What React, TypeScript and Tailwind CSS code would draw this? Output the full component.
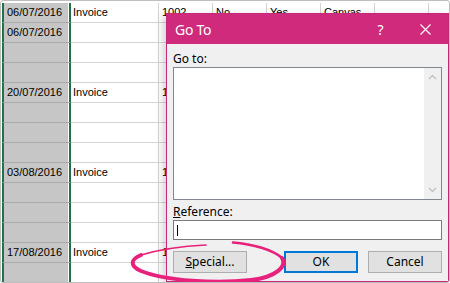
import React from 'react';

const rows: string[][] = [
  ['06/07/2016', 'Invoice', '1002', 'No', 'Yes', 'Canvas'],
  ['06/07/2016'],
  [],
  [],
  ['20/07/2016', 'Invoice', '1003'],
  [],
  [],
  [],
  ['03/08/2016', 'Invoice', '1004'],
  [],
  [],
  [],
  ['17/08/2016', 'Invoice', '1005'],
  [],
];

const Chevron = ({ up }: { up?: boolean }) => (
  <svg width="9" height="6" viewBox="0 0 9 6" className="block">
    <polyline
      points={up ? '1,5 4.5,1.5 8,5' : '1,1 4.5,4.5 8,1'}
      fill="none"
      stroke="#c2c2c2"
      strokeWidth="1.4"
    />
  </svg>
);

const Sheet = () => (
  <div className="flex flex-col pt-[2px] pl-[1px] font-['Liberation_Sans',Arial,sans-serif] text-[11px] text-black">
    {rows.map((r, i) => (
      <div key={i} className="flex h-[20px] shrink-0">
        <div className="w-[69px] shrink-0 bg-[#c6c6c6] border-l-2 border-r-2 border-l-[#217346] border-r-[#217346] border-b border-b-[#a9a9a9] shadow-[inset_-1px_0_0_#fff] pl-[3px] flex items-center">
          {r[0]}
        </div>
        <div className="w-[88px] shrink-0 border-r border-b border-[#d4d4d4] pl-[2px] flex items-center">
          {r[1]}
        </div>
        {[2, 3, 4, 5, 6].map((c) => (
          <div key={c} className="w-[54px] shrink-0 border-r border-b border-[#d4d4d4] pl-[3px] flex items-center overflow-hidden whitespace-nowrap">
            {r[c]}
          </div>
        ))}
        <div className="flex-1 border-b border-[#d4d4d4]" />
      </div>
    ))}
  </div>
);

const GoToDialog = () => (
  <div className="absolute left-[165px] top-[12px] w-[283px] h-[269px] border border-[#c8287a] bg-[#f0f0f0] shadow-[-3px_2px_8px_rgba(0,0,0,0.18)] flex flex-col font-['Noto_Sans',sans-serif] text-[12px] text-black">
    {/* Title bar */}
    <div className="h-[30px] shrink-0 bg-[#cf2a7c] flex items-center text-white">
      <span className="pl-[8px] text-[14px] tracking-[-0.3px]">Go To</span>
      <span className="ml-auto w-[45px] text-center text-[14px]">?</span>
      <span className="w-[45px] flex justify-center">
        <svg width="11" height="11" viewBox="0 0 11 11">
          <path d="M0.5 0.5 L10.5 10.5 M10.5 0.5 L0.5 10.5" stroke="#fff" strokeWidth="1.2" />
        </svg>
      </span>
    </div>

    <div className="flex flex-col px-[6px]">
      <div className="mt-[7px] h-[16px] leading-[16px]">Go to:</div>
      <div className="h-[133px] border border-[#828790] bg-white flex justify-end">
        <div className="w-[17px] bg-[#f0f0f0] flex flex-col items-center justify-between py-[6px]">
          <Chevron up />
          <Chevron />
        </div>
      </div>

      <div className="mt-[4px] h-[16px] leading-[16px]">
        <span className="underline">R</span>eference:
      </div>
      <div className="h-[20px] border border-[#7a7a7a] bg-white flex items-center pl-[3px]">
        <div className="w-px h-[11px] bg-black" />
      </div>

      <div className="mt-[11px] flex">
        <button className="w-[74px] h-[22px] bg-[#e1e1e1] border border-[#adadad]">
          <span className="underline">S</span>pecial...
        </button>
        <button className="ml-auto w-[74px] h-[22px] bg-[#e1e1e1] border-2 border-[#0078d7]">OK</button>
        <button className="ml-[10px] w-[74px] h-[22px] bg-[#e1e1e1] border border-[#adadad]">Cancel</button>
      </div>
    </div>
  </div>
);

const Annotation = () => (
  <svg className="absolute left-0 top-0 pointer-events-none" width="450" height="283" viewBox="0 0 450 283">
    <g fill="none" stroke="#e8217c" strokeLinecap="round">
      <path d="M232 241.5 C252 243 272 249 281 257" strokeWidth="2.5" />
      <path d="M281 257 C286 265 276 276 250 279 C215 283 165 280 140 270 C128 265 130 258 140 254" strokeWidth="4" />
      <path d="M140 254 C160 248 185 245 205 244" strokeWidth="1.5" />
    </g>
  </svg>
);

export default function App() {
  return (
    <div className="relative w-[450px] h-[283px] overflow-hidden bg-white border border-[#bdbdbd] rounded-[3px]">
      <Sheet />
      <GoToDialog />
      <Annotation />
    </div>
  );
}
